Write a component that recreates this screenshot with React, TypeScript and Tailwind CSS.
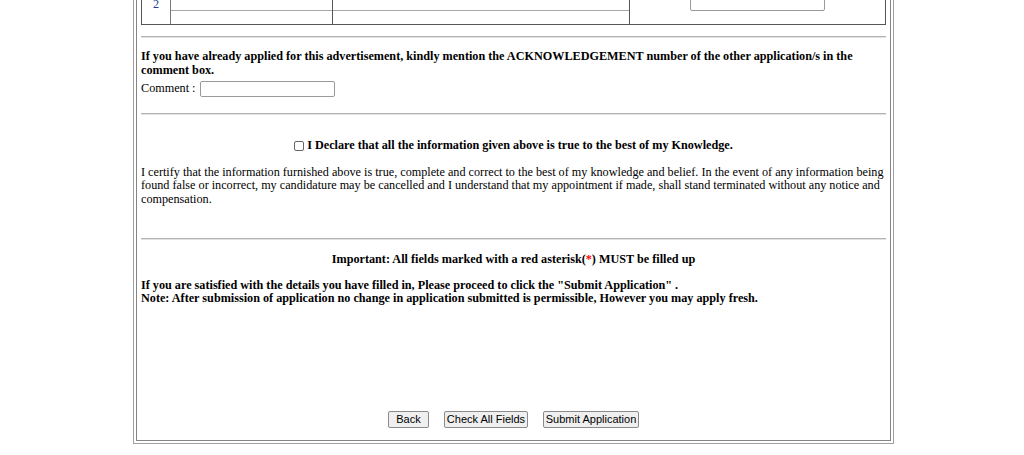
import React from 'react';

const hr = "h-0 border-t border-t-[#b4b4b4] border-b border-b-[#e2e2e2]";
const btn = "h-[17px] px-0 whitespace-nowrap border border-[#8a8a8a] rounded-[2px] bg-[#efefef] text-[11px] leading-none text-black font-['Liberation_Sans',Arial,sans-serif] flex items-center justify-center";

export default function App() {
    return (
        <div className="w-[1024px] h-[455px] overflow-hidden bg-white font-['Liberation_Serif','Times_New_Roman',serif] text-[12.2px] leading-[13.5px] text-black">
            {/* outer table (scrolled, top is off screen) */}
            <div className="ml-[133px] -mt-[40px] w-[761px] border border-[#a0a0a0] p-[2px]">
                <div className="border border-[#858585] p-[4px]">

                    {/* bottom of qualifications table */}
                    <div className="h-[57px] border border-[#555] flex">
                        <div className="w-[29px] border-r border-[#777] pt-[29px] text-center text-[#1f3f8f]">2</div>
                        <div className="w-[162px] border-r border-[#555]">
                            <div className="h-[42px] border-b border-[#a8a8a8]" />
                        </div>
                        <div className="w-[297px] border-r border-[#555]">
                            <div className="h-[42px] border-b border-[#a8a8a8]" />
                        </div>
                        <div className="flex-1 flex justify-center pt-[26px]">
                            <div className="w-[135px] h-[16px] border border-[#9a9a9a] rounded-[2px] bg-white" />
                        </div>
                    </div>

                    <div className={`mt-[11px] ${hr}`} />

                    {/* previous application */}
                    <p className="mt-[12px] font-bold">
                        If you have already applied for this advertisement, kindly mention the ACKNOWLEDGEMENT number of the other application/s in the comment box.
                    </p>
                    <div className="mt-[4px] h-[16px] flex items-center">
                        <span>Comment :</span>
                        <div className="ml-[4px] w-[135px] h-[16px] border border-[#9a9a9a] rounded-[2px] bg-white" />
                    </div>

                    <div className={`mt-[16px] ${hr}`} />

                    {/* declaration */}
                    <div className="mt-[24px] flex justify-center items-center font-bold">
                        <span className="w-[10px] h-[10px] border border-[#666] rounded-[2px] bg-white mr-[3px]" />
                        <span>I Declare that all the information given above is true to the best of my Knowledge.</span>
                    </div>
                    <p className="mt-[13px]">
                        I certify that the information furnished above is true, complete and correct to the best of my knowledge and belief. In the event of any information being found false or incorrect, my candidature may be cancelled and I understand that my appointment if made, shall stand terminated without any notice and compensation.
                    </p>

                    <div className={`mt-[32px] ${hr}`} />

                    <p className="mt-[13px] text-center font-bold">
                        Important: All fields marked with a red asterisk(<span className="text-[#ff0000]">*</span>) MUST be filled up
                    </p>
                    <p className="mt-[12px] font-bold">
                        If you are satisfied with the details you have filled in, Please proceed to click the "Submit Application" .
                        <br />
                        Note: After submission of application no change in application submitted is permissible, However you may apply fresh.
                    </p>

                    {/* actions */}
                    <div className="mt-[105px] mb-[8px] flex justify-center gap-[15px]">
                        <button className={`${btn} w-[41px]`}>Back</button>
                        <button className={`${btn} w-[84px]`}>Check All Fields</button>
                        <button className={`${btn} w-[96px]`}>Submit Application</button>
                    </div>
                </div>
            </div>
        </div>
    );
}
